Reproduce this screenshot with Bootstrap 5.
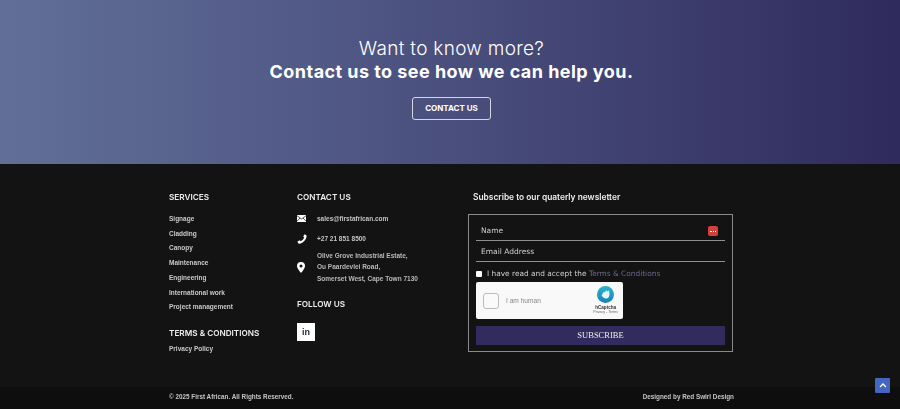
<!DOCTYPE html>
<html lang="en">
<head>
  <meta charset="UTF-8">
  <title>First African - Contact</title>
  <link href="https://cdn.jsdelivr.net/npm/bootstrap@5.3.0/dist/css/bootstrap.min.css" rel="stylesheet">
  <style>
    body { background: #141314; font-family: "Liberation Sans", Arial, sans-serif; overflow: hidden; }
    .hero-band {
      height: 164px;
      padding: 37px 0 0 3px;
      background: linear-gradient(90deg, #616f98 0%, #4f5683 40%, #2f2b5c 100%);
      color: #fff;
      font-family: Inter, "Liberation Sans", sans-serif;
    }
    .hero-light { font-size: 19px; font-weight: 300; line-height: 24px; letter-spacing: .3px; }
    .hero-bold { font-size: 18px; font-weight: 700; line-height: 22px; letter-spacing: .45px; }
    .hero-btn {
      margin-top: 14px;
      width: 79px; height: 23px;
      padding: 0;
      font-size: 8px; font-weight: 700; line-height: 20px;
      color: #fff;
      border: 1px solid #d5d6e2;
      border-radius: 3px;
    }
    .foot-main { height: 223px; padding-top: 28px; }
    .foot-inner { width: 565px; margin-left: 169px; will-change: opacity; }
    .col-serv { width: 128px; }
    .col-cont { width: 171px; }
    .col-news { width: 265px; }
    .foot-head {
      font-family: Inter, "Liberation Sans", sans-serif;
      font-size: 8.2px; font-weight: 600; line-height: 11px;
      color: #eee; margin: 0;
    }
    .link-list { margin: 9px 0 0; padding: 0; list-style: none; }
    .link-list li { font-size: 6.5px; font-weight: 700; line-height: 14.7px; color: #c9c9c9; }
    .terms-head { margin-top: 13px; }
    .privacy { font-size: 6.5px; font-weight: 700; color: #c9c9c9; margin-top: 4px; line-height: 12px; }
    .contact-row { display: flex; align-items: center; color: #c4c4c4; font-size: 6.5px; font-weight: 700; }
    .row-mail { margin-top: 11px; }
    .row-phone { margin-top: 10px; }
    .row-addr { margin-top: 6px; }
    .icon-slot { width: 20px; flex: none; display: flex; align-items: center; }
    .addr { line-height: 11.7px; color: #b8b8b8; }
    .follow-head { margin-top: 14px; }
    .li-box {
      width: 18px; height: 18px; margin-top: 13px;
      background: #fff; color: #1d2a3a;
      font-size: 9px; font-weight: 700; line-height: 18px; text-align: center;
    }
    .news-head { margin-left: 5px; font-size: 8.4px; }
    .news-box { margin-top: 11px; height: 138px; border: 1px solid #8a8a8a; padding: 5px 7px 7px; }
    .fld {
      height: 21px; position: relative;
      font-family: "DejaVu Sans", sans-serif; font-size: 7.5px; line-height: 22px; color: #cfcfcf;
      padding-left: 5px; border-bottom: 1px solid #8f8f8f;
    }
    .fld-badge {
      position: absolute; right: 7px; top: 6px;
      width: 10px; height: 10px; border-radius: 2px; background: #d4413a;
      display: flex; align-items: center; justify-content: center;
    }
    .fld-badge i { width: 6px; border-top: 1px dotted #fff; }
    .accept {
      font-family: "DejaVu Sans", sans-serif; font-size: 7.4px; line-height: 10px; color: #cfcfcf;
      margin-top: 7px; display: flex; align-items: center; gap: 5px;
    }
    .accept i { width: 6px; height: 6px; background: #fff; border-radius: 1px; flex: none; }
    .accept span { color: #6b6a8a; }
    .captcha {
      width: 147px; height: 37px; margin-top: 3px;
      background: #f9f9f9; border-radius: 2px;
      display: flex; align-items: center; padding: 0 5px 0 7px;
      color: #888; font-size: 6.6px;
    }
    .cap-check { width: 16px; height: 16px; border: 1px solid #bbb; border-radius: 3px; background: #fafafa; margin-right: 7px; flex: none; }
    .cap-logo { margin-left: auto; text-align: center; line-height: 5px; color: #333; }
    .cap-logo svg { display: block; margin: 0 auto 2px; }
    .cap-logo b { display: block; font-size: 4.6px; }
    .cap-logo small { display: block; font-size: 3.6px; color: #666; }
    .sub-btn {
      width: 100%; height: 19px; margin-top: 7px; padding: 0;
      background: #322c5e; border: 0; border-radius: 0;
      font-family: "Liberation Serif", serif; font-size: 8.5px; line-height: 19px; color: #eee;
    }
    .foot-bottom { height: 22px; background: #0e0e0f; font-size: 6.35px; font-weight: 700; color: #c4c4c4; line-height: 19px; position: relative; }
    .to-top {
      position: absolute; right: 10px; top: -9px;
      width: 15px; height: 15px; background: #4566c0; border-radius: 1px;
      display: flex; align-items: center; justify-content: center;
    }
  </style>
</head>
<body>

  <section class="hero-band text-center">
    <div class="hero-light">Want to know more?</div>
    <div class="hero-bold">Contact us to see how we can help you.</div>
    <a href="#" class="btn hero-btn">CONTACT US</a>
  </section>

  <footer>
    <div class="foot-main">
      <div class="foot-inner d-flex">
        <div class="col-serv">
          <h6 class="foot-head">SERVICES</h6>
          <ul class="link-list">
            <li>Signage</li>
            <li>Cladding</li>
            <li>Canopy</li>
            <li>Maintenance</li>
            <li>Engineering</li>
            <li>International work</li>
            <li>Project management</li>
          </ul>
          <h6 class="foot-head terms-head">TERMS &amp; CONDITIONS</h6>
          <div class="privacy">Privacy Policy</div>
        </div>

        <div class="col-cont">
          <h6 class="foot-head">CONTACT US</h6>
          <div class="contact-row row-mail">
            <span class="icon-slot">
              <svg width="9" height="7" viewBox="0 0 9 7"><rect width="9" height="7" fill="#fff"/><path d="M0 .8 4.500 4 9 .8M0 6.200 3 3M9 6.200 6 3" fill="none" stroke="#151415" stroke-width=".7"/></svg>
            </span>
            <span>sales@firstafrican.com</span>
          </div>
          <div class="contact-row row-phone">
            <span class="icon-slot">
              <svg width="10" height="10" viewBox="0 0 10 10"><path d="M9.600 1.600 7.600.2 6.200 2.600l1 1C6.800 5 5.200 6.700 3.700 7.200l-1-1L.3 7.700 1.700 9.700C5.500 10 9.800 5.600 9.600 1.600Z" fill="#fff"/></svg>
            </span>
            <span>+27 21 851 8500</span>
          </div>
          <div class="contact-row row-addr">
            <span class="icon-slot">
              <svg width="8" height="11" viewBox="0 0 8 11"><path fill-rule="evenodd" d="M4 0a4 4 0 0 1 4 4c0 2.500-4 7-4 7S0 6.500 0 4a4 4 0 0 1 4-4Zm0 2.500a1.500 1.500 0 1 0 0 3 1.500 1.500 0 0 0 0-3Z" fill="#fff"/></svg>
            </span>
            <div class="addr">Olive Grove Industrial Estate,<br>Ou Paardevlei Road,<br>Somerset West, Cape Town 7130</div>
          </div>
          <h6 class="foot-head follow-head">FOLLOW US</h6>
          <div class="li-box">in</div>
        </div>

        <div class="col-news">
          <h6 class="foot-head news-head">Subscribe to our quaterly newsletter</h6>
          <div class="news-box">
            <div class="fld">Name <span class="fld-badge"><i></i></span></div>
            <div class="fld">Email Address</div>
            <div class="accept"><i></i> <div>I have read and accept the <span>Terms &amp; Conditions</span></div></div>
            <div class="captcha">
              <div class="cap-check"></div>
              <div>I am human</div>
              <div class="cap-logo">
                <svg width="17" height="17" viewBox="0 0 17 17"><defs><linearGradient id="capg" x1="0" y1="0" x2="0" y2="1"><stop offset="0" stop-color="#2bb5c9"/><stop offset="1" stop-color="#1a7fb8"/></linearGradient></defs><circle cx="8.500" cy="8.500" r="8.500" fill="url(#capg)"/><path d="M4.500 9.500 7 5.500l1 1 1-2.500 1 1.500L12 4.500l.5 4c0 2.500-2 4.500-4 4-1.500-.4-3-1.500-4-3Z" fill="#e6f5f8"/></svg>
                <b>hCaptcha</b>
                <small>Privacy - Terms</small>
              </div>
            </div>
            <button type="button" class="btn sub-btn">SUBSCRIBE</button>
          </div>
        </div>
      </div>
    </div>

    <div class="foot-bottom">
      <div class="foot-inner d-flex justify-content-between">
        <span>© 2025 First African. All Rights Reserved.</span>
        <span>Designed by Red Swirl Design</span>
      </div>
      <a href="#" class="to-top">
        <svg width="8" height="5" viewBox="0 0 8 5"><path d="M1 4 4 1l3 3" fill="none" stroke="#fff" stroke-width="1.300"/></svg>
      </a>
    </div>
  </footer>

<script src="https://cdn.jsdelivr.net/npm/bootstrap@5.3.0/dist/js/bootstrap.bundle.min.js"></script>
</body>
</html>
